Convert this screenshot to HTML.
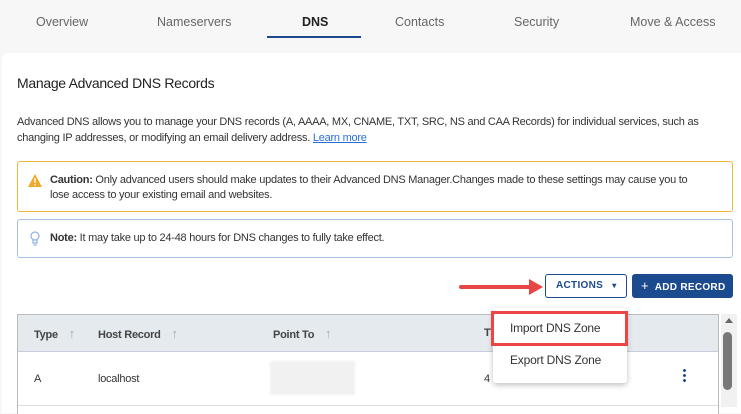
<!DOCTYPE html>
<html><head><meta charset="utf-8"><style>
*{box-sizing:border-box;margin:0;padding:0}
body{width:741px;height:407px;overflow:hidden;background:#f7f7f7;font-family:"Liberation Sans",sans-serif;color:#333;position:relative;font-size:11px;letter-spacing:-0.25px}
.abs{position:absolute}
.tab{position:absolute;top:15px;font-size:12.5px;color:#666;letter-spacing:0}
.card{position:absolute;left:2px;top:53px;width:745px;height:360px;background:#fff;border-radius:6px 0 0 0}
.box{position:absolute;left:17px;width:716px;border-radius:3px;background:#fff}
b{font-weight:bold;color:#333}
.ar{color:#aaa;font-weight:normal;margin-left:8px;font-size:13px}
</style></head><body>
<div class="tab" style="left:36px">Overview</div>
<div class="tab" style="left:157px">Nameservers</div>
<div class="tab" style="left:302px;color:#222;font-weight:bold">DNS</div>
<div class="tab" style="left:395px">Contacts</div>
<div class="tab" style="left:514px">Security</div>
<div class="tab" style="left:630px">Move &amp; Access</div>
<div class="abs" style="left:267px;top:36px;width:94px;height:2px;background:#1b4a8f"></div>
<div class="card"></div>
<div class="abs" style="left:17px;top:75px;font-size:14px;color:#222;letter-spacing:-0.3px">Manage Advanced DNS Records</div>
<div class="abs" style="left:17px;top:114px;width:710px;line-height:16px;color:#333">Advanced DNS allows you to manage your DNS records (A, AAAA, MX, CNAME, TXT, SRC, NS and CAA Records) for individual services, such as changing IP addresses, or modifying an email delivery address. <span style="color:#2a6fd6;text-decoration:underline">Learn more</span></div>
<div class="box" style="top:161px;height:51px;border:1px solid #f0b73a"></div>
<svg class="abs" style="left:28px;top:174px" width="14" height="13"><path d="M7 0L14 13H0Z" fill="#f0a92a"/><rect x="6.3" y="4" width="1.4" height="5" fill="#fff"/><rect x="6.3" y="10" width="1.4" height="1.4" fill="#fff"/></svg>
<div class="abs" style="left:50px;top:173px;width:652px;line-height:15px"><b>Caution:</b> Only advanced users should make updates to their Advanced DNS Manager.Changes made to these settings may cause you to lose access to your existing email and websites.</div>
<div class="box" style="top:219px;height:39px;border:1px solid #a7c0e8"></div>
<svg class="abs" style="left:30px;top:231px" width="10" height="15"><circle cx="5" cy="5" r="4" fill="none" stroke="#8fb0e0" stroke-width="1.2"/><path d="M3 9v3h4V9M3.5 14h3" stroke="#8fb0e0" fill="none" stroke-width="1.2"/></svg>
<div class="abs" style="left:50px;top:232px"><b>Note:</b> It may take up to 24-48 hours for DNS changes to fully take effect.</div>
<svg class="abs" style="left:455px;top:278px" width="92" height="18"><line x1="6" y1="9" x2="78" y2="9" stroke="#e84545" stroke-width="4" stroke-linecap="round"/><path d="M74 1L88 9L74 17Z" fill="#e84545"/></svg>
<div class="abs" style="left:545px;top:274px;width:82px;height:24px;border:1px solid #1b4a8f;border-radius:3px;color:#1b4a8f;font-weight:bold;font-size:10px;letter-spacing:0.3px;line-height:22px;padding-left:10px">ACTIONS <span style="margin-left:6px;font-size:8px">▾</span></div>
<div class="abs" style="left:632px;top:274px;width:101px;height:24px;background:#1b4a8f;border-radius:3px;color:#fff;font-weight:bold;font-size:10px;letter-spacing:0.3px;line-height:24px;padding-left:9px"><span style="font-size:13px;font-weight:normal">+</span>&nbsp; ADD RECORD</div>
<div class="abs" style="left:17px;top:314px;width:702px;height:100px;border:1px solid #bbb;border-bottom:none;background:#fff"></div>
<div class="abs" style="left:18px;top:315px;width:700px;height:37px;background:#e4eaee;border-bottom:1px solid #ccd"></div>
<div class="abs" style="left:34px;top:326px;font-weight:bold;color:#444">Type <span class="ar">↑</span></div>
<div class="abs" style="left:98px;top:326px;font-weight:bold;color:#444">Host Record <span class="ar">↑</span></div>
<div class="abs" style="left:273px;top:326px;font-weight:bold;color:#444">Point To <span class="ar">↑</span></div>
<div class="abs" style="left:484px;top:327px;font-weight:bold;color:#444">TT</div>
<div class="abs" style="left:34px;top:373px">A</div>
<div class="abs" style="left:98px;top:373px">localhost</div>
<div class="abs" style="left:270px;top:361px;width:85px;height:34px;background:#f1f1f1;filter:blur(1px)"></div>
<div class="abs" style="left:484px;top:373px">4 I</div>
<div class="abs" style="left:683px;top:368px;width:3px;height:14px;background:radial-gradient(circle,#1b4a8f 1.4px,transparent 1.5px) 0 0/3px 5px"></div>
<div class="abs" style="left:18px;top:405px;width:700px;height:1px;background:#ddd"></div>
<div class="abs" style="left:721px;top:314px;width:16px;height:93px;background:#f1f1f1"></div>
<div class="abs" style="left:725px;top:318px;width:0;height:0;border-left:4px solid transparent;border-right:4px solid transparent;border-bottom:5px solid #666"></div>
<div class="abs" style="left:723px;top:332px;width:9px;height:58px;background:#777;border-radius:5px"></div>
<div class="abs" style="left:493px;top:308px;width:134px;height:75px;background:#fff;box-shadow:0 2px 6px rgba(0,0,0,.25);border-radius:3px"></div>
<div class="abs" style="left:491px;top:311px;width:137px;height:35px;border:3px solid #ef4444"></div>
<div class="abs" style="left:510px;top:321px;font-size:12px;color:#333;letter-spacing:-0.2px">Import DNS Zone</div>
<div class="abs" style="left:510px;top:353px;font-size:12px;color:#333;letter-spacing:-0.2px">Export DNS Zone</div>
</body></html>
